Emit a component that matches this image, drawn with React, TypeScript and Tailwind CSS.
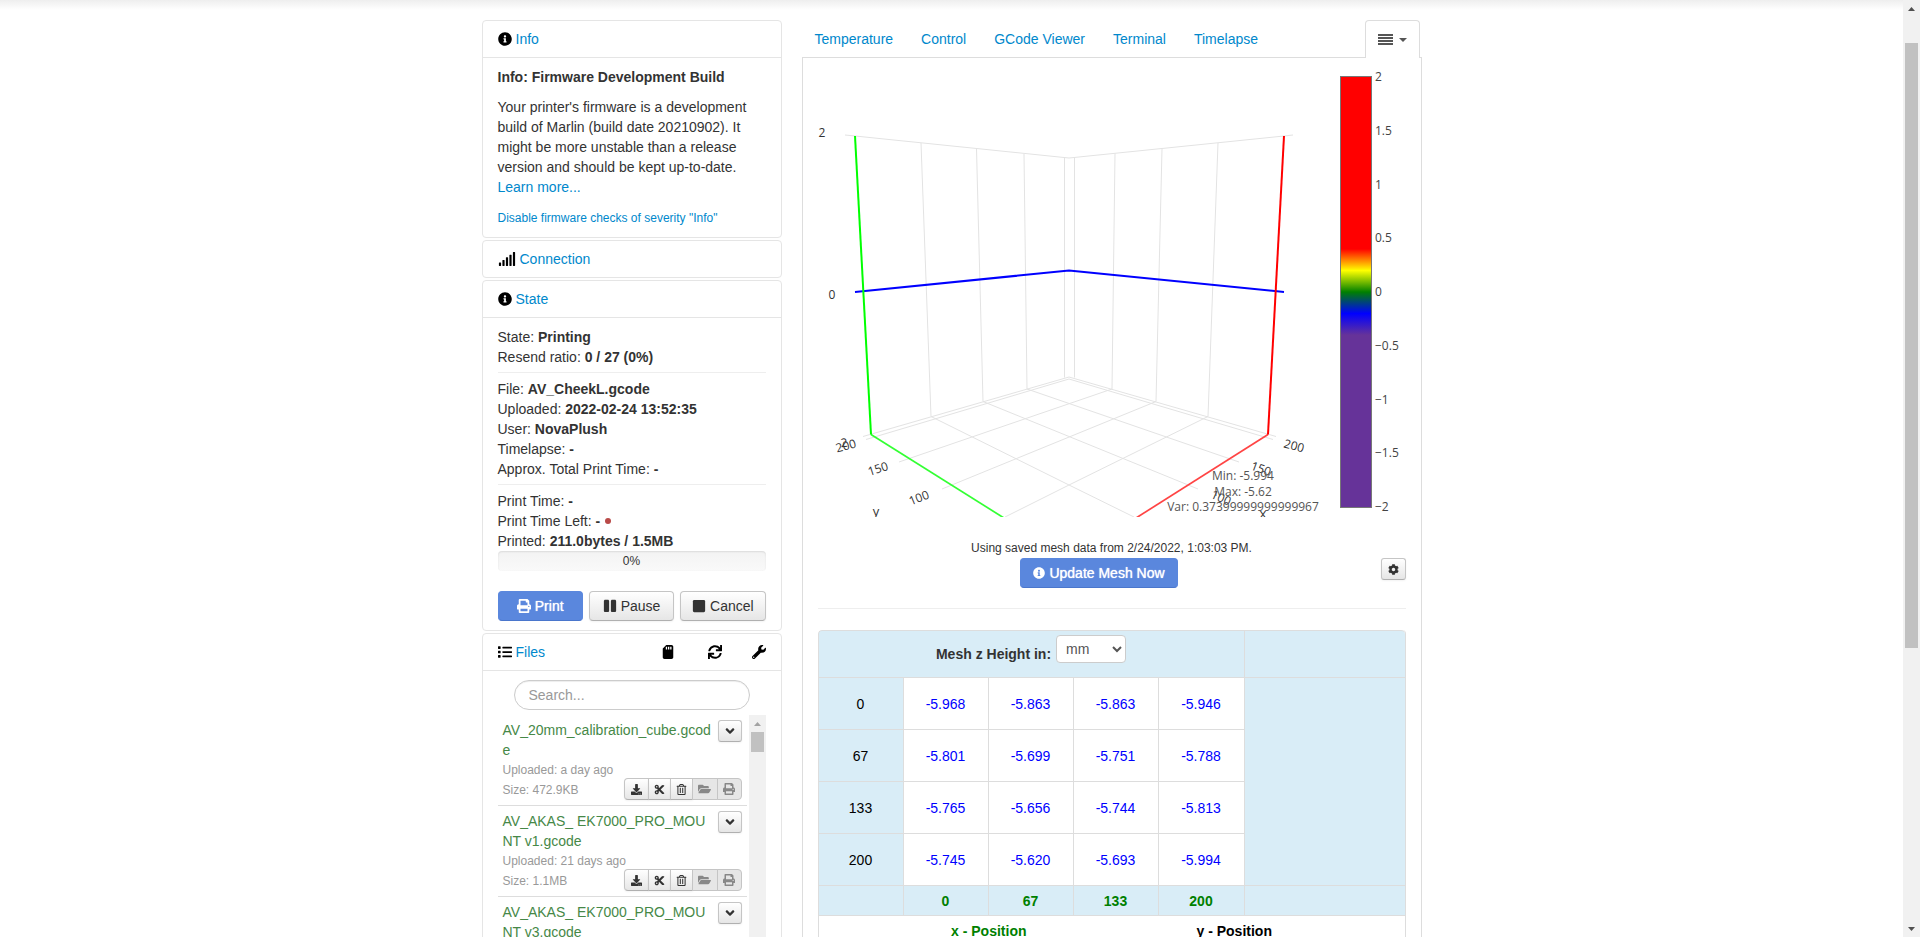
import React from 'react';
import {
  FaAngleDown,
  FaCog,
  FaCut,
  FaDownload,
  FaFolderOpen,
  FaInfoCircle,
  FaList,
  FaPause,
  FaPrint,
  FaRegTrashAlt,
  FaSdCard,
  FaSignal,
  FaStop,
  FaSync,
  FaWrench
} from 'react-icons/fa';

const btn = 'border border-[#c5c5c5] border-b-[#b0b0b0] bg-linear-to-b from-white to-[#e6e6e6] text-[#333] shadow-[0_1px_2px_rgba(0,0,0,0.05)]';
const btnPrimary = 'border border-[#5a87dd] border-b-[#4a76cc] bg-[#5a87dd] text-white [text-shadow:0_0_1px_#fff]';

const tabs = ['Temperature', 'Control', 'GCode Viewer', 'Terminal', 'Timelapse'];

const files = [
  { name: 'AV_20mm_calibration_cube.gcode', uploaded: 'a day ago', size: '472.9KB' },
  { name: 'AV_AKAS_ EK7000_PRO_MOUNT v1.gcode', uploaded: '21 days ago', size: '1.1MB' },
  { name: 'AV_AKAS_ EK7000_PRO_MOUNT v3.gcode', uploaded: '21 days ago', size: '1.1MB' }
];

const mesh = [
  { y: '0', z: ['-5.968', '-5.863', '-5.863', '-5.946'] },
  { y: '67', z: ['-5.801', '-5.699', '-5.751', '-5.788'] },
  { y: '133', z: ['-5.765', '-5.656', '-5.744', '-5.813'] },
  { y: '200', z: ['-5.745', '-5.620', '-5.693', '-5.994'] }
];

const ticks = ['2', '1.5', '1', '0.5', '0', '−0.5', '−1', '−1.5', '−2'];

interface PanelProps {
  icon: React.ReactNode;
  title: string;
  actions?: React.ReactNode;
  children?: React.ReactNode;
}

function Panel({ icon, title, actions, children }: PanelProps) {
  return <section className="mb-0.5 rounded border border-[#e5e5e5]">
      <div className="flex items-center justify-between px-[15px] py-2">
        <a href="#" className="flex items-center gap-1 text-[#0088cc]">
          <span className="text-black">{icon}</span>
          {title}
        </a>
        {actions}
      </div>
      {children && <div className="border-t border-[#e5e5e5] px-[15px] py-[9px]">{children}</div>}
    </section>;
}

function Row({ label, children }: { label: string; children: React.ReactNode }) {
  return <div>
      {label}: <strong>{children}</strong>
    </div>;
}

function Divider() {
  return <hr className="my-[5px] border-t border-b border-t-[#eee] border-b-white" />;
}

function StatePanel() {
  return <Panel icon={<FaInfoCircle />} title="State">
      <Row label="State">Printing</Row>
      <Row label="Resend ratio">0 / 27 (0%)</Row>
      <Divider />
      <Row label="File">AV_CheekL.gcode</Row>
      <Row label="Uploaded">2022-02-24 13:52:35</Row>
      <Row label="User">NovaPlush</Row>
      <Row label="Timelapse">-</Row>
      <Row label="Approx. Total Print Time">-</Row>
      <Divider />
      <Row label="Print Time">-</Row>
      <div className="flex items-center gap-[5px]">
        <Row label="Print Time Left">-</Row>
        <span className="size-1.5 rounded-full bg-[#b94a48]" />
      </div>
      <Row label="Printed">211.0bytes / 1.5MB</Row>
      <div role="progressbar" aria-valuenow={0} className="mb-5 h-5 rounded bg-linear-to-b from-[#f3f3f3] to-[#f9f9f9] text-center text-xs leading-5 shadow-[inset_0_1px_2px_rgba(0,0,0,0.1)]">
        0%
      </div>
      <div className="grid grid-cols-3 gap-1.5">
        <button className={`flex h-[30px] items-center justify-center gap-1 rounded ${btnPrimary}`}><FaPrint />Print</button>
        <button className={`flex h-[30px] items-center justify-center gap-1 rounded ${btn}`}><FaPause />Pause</button>
        <button className={`flex h-[30px] items-center justify-center gap-1 rounded ${btn}`}><FaStop />Cancel</button>
      </div>
    </Panel>;
}

function FileEntry({ name, uploaded, size }: { name: string; uploaded: string; size: string }) {
  const mini = `flex h-[22px] items-center justify-center text-[11px] ${btn}`;
  const off = 'flex h-[22px] items-center justify-center border border-[#c5c5c5] bg-[#e6e6e6] text-xs text-[#888]';
  return <li className="border-b border-[#ddd] p-[5px]">
      <div className="flex items-start gap-1.5">
        <a href="#" className="min-w-0 flex-1 break-all text-[#468847]">{name}</a>
        <button aria-label="Details" className={`flex h-[22px] w-6 shrink-0 items-center justify-center rounded-[3px] text-sm ${btn}`}>
          <FaAngleDown />
        </button>
      </div>
      <div className="text-xs leading-5 text-[#999]">Uploaded: {uploaded}</div>
      <div className="flex h-5 items-end justify-between text-xs leading-5 text-[#999]">
        <span>Size: {size}</span>
        <div className="flex">
          <button aria-label="Download" className={`w-[25px] rounded-l ${mini}`}><FaDownload /></button>
          <button aria-label="Cut" className={`-ml-px w-[23px] ${mini}`}><FaCut /></button>
          <button aria-label="Delete" className={`-ml-px w-[23px] ${mini}`}><FaRegTrashAlt /></button>
          <button aria-label="Load" disabled className={`-ml-px w-[26px] ${off}`}><FaFolderOpen className="h-3 w-[13px]" /></button>
          <button aria-label="Print" disabled className={`-ml-px w-[25px] rounded-r ${off}`}><FaPrint /></button>
        </div>
      </div>
    </li>;
}

function FilesPanel() {
  const actions = <div className="flex items-center text-black">
      <button aria-label="SD card" className="mr-[34px]"><FaSdCard className="h-3.5 w-3" /></button>
      <button aria-label="Refresh" className="mr-[30px]"><FaSync /></button>
      <button aria-label="Settings"><FaWrench /></button>
    </div>;
  return <Panel icon={<FaList />} title="Files" actions={actions}>
      <input
        type="search"
        aria-label="Search files"
        placeholder="Search..."
        className="mx-auto mb-[5px] block h-[30px] w-[236px] rounded-full border border-[#ccc] px-3.5 shadow-[inset_0_1px_1px_rgba(0,0,0,0.075)] placeholder:text-[#999]"
      />
      <div className="flex">
        <ul className="mr-0.5 min-w-0 flex-1">
          {files.map(file => <FileEntry key={file.name} {...file} />)}
        </ul>
        <div className="w-[17px] bg-[#f1f1f1]">
          <svg viewBox="0 0 17 17" className="block w-full"><path d="M5 11h7L8.500 7z" fill="#a3a3a3" /></svg>
          <div className="mx-0.5 h-5 bg-[#c1c1c1]" />
        </div>
      </div>
    </Panel>;
}

function MeshPlot() {
  return <svg viewBox="0 0 588 480" className="block w-full font-['Open_Sans',sans-serif] text-xs">
      <defs>
        <linearGradient id="scale" x1="0" y1="0" x2="0" y2="1">
          <stop offset="0.4" stopColor="#f00" />
          <stop offset="0.45" stopColor="#ff0" />
          <stop offset="0.5" stopColor="#008000" />
          <stop offset="0.55" stopColor="#00f" />
          <stop offset="0.6" stopColor="#639" />
        </linearGradient>
        <clipPath id="scene">
          <rect width="588" height="459" />
        </clipPath>
      </defs>

      <g clipPath="url(#scene)" fill="none">
        {/* walls and floor */}
        <g stroke="#e3e3e3">
          <path d="M27 77 37 78 251 100 466 78 475 77" />
          <path d="M103 85 113 358.500M158.500 91 165 343.500M206 96 209 331M246.500 99.500V319.500M256.500 99.500V319.500M297 95.500 294 331M344 91 338 343.500M400 85 390 358.500" />
          <path d="M45 378.500 251 319 458 378.500M48 381.500 251 321 455 381.500" />
          <path d="M113 358.500 251 427 316 459M165 343.500 380 431M209 331 421 404" />
          <path d="M390 358.500 251 427 187 459M338 343.500 124 431M294 331 81 404" />
        </g>
        {/* axes */}
        <path d="M53 376.500 186 460" stroke="#3f3" strokeWidth="1.700" />
        <path d="M450 376.500 318 460" stroke="#f44" strokeWidth="1.700" />
        <path d="M37 234 251 212.500 466 234" stroke="#00f" strokeWidth="2" />
        <path d="M37 78 53 376.500" stroke="#0f0" strokeWidth="2" />
        <path d="M466 78 450 376.500" stroke="#f00" strokeWidth="2" />
        <g fill="#333" textAnchor="middle">
          <text x="4" y="79">2</text>
          <text x="14" y="241">0</text>
          <text transform="translate(28 388) rotate(-15)" y="4">200</text>
          <text transform="translate(26 385) rotate(-5)" y="4">2</text>
          <text transform="translate(60 411) rotate(-18)" y="4">150</text>
          <text transform="translate(101 440) rotate(-22)" y="4">100</text>
          <text transform="translate(476 388) rotate(15)" y="4">200</text>
          <text transform="translate(443 411) rotate(20)" y="4">150</text>
          <text transform="translate(403 440) rotate(24)" y="4">100</text>
          <text x="58" y="458" className="text-[13px]">y</text>
          <text x="445" y="460" className="text-[13px]">x</text>
        </g>
      </g>

      <g fill="#555" textAnchor="middle">
        <text x="425" y="422">Min: -5.994</text>
        <text x="425" y="438">Max: -5.62</text>
        <text x="425" y="453">Var: 0.37399999999999967</text>
      </g>

      <rect x="522.500" y="18.500" width="31" height="431" fill="url(#scale)" stroke="#777" />
      <g fill="#444">
        {ticks.map((tick, i) => <text key={tick} x="557" y={23 + i * 53.75}>{tick}</text>)}
      </g>
    </svg>;
}

function MeshTable() {
  const cell = 'border-t border-l border-[#ddd]';
  const blue = 'bg-[#d9edf7]';
  return <table className="w-full table-fixed border-separate border-spacing-0 overflow-hidden rounded border-r border-b border-[#ddd] text-center">
      <colgroup>
        <col className="w-[85px]" />
        <col className="w-[85px]" />
        <col className="w-[85px]" />
        <col className="w-[85px]" />
        <col className="w-[86px]" />
        <col />
      </colgroup>
      <thead>
        <tr className="h-[47px]">
          <th colSpan={5} className={`rounded-tl ${cell} ${blue}`}>
            <div className="flex items-center justify-center gap-[5px]">
              <label htmlFor="unit">Mesh z Height in:</label>
              <select id="unit" className="mb-2.5 h-7 w-[70px] rounded border border-[#ccc] bg-white px-[5px] font-normal text-[#555]">
                <option>mm</option>
              </select>
            </div>
          </th>
          <th className={`rounded-tr ${cell} ${blue}`} />
        </tr>
      </thead>
      <tbody>
        {mesh.map((row, i) => <tr key={row.y} className="h-[52px]">
            <td className={`text-black ${cell} ${blue}`}>{row.y}</td>
            {row.z.map((z, j) => <td key={j} className={`text-[#0000ff] ${cell}`}>{z}</td>)}
            {i === 0 && <td rowSpan={4} className={`${cell} ${blue}`} />}
          </tr>)}
        <tr className="h-[30px] font-bold text-[#008000]">
          <td className={`${cell} ${blue}`} />
          {mesh.map(row => <td key={row.y} className={`${cell} ${blue}`}>{row.y}</td>)}
          <td className={`${cell} ${blue}`} />
        </tr>
        <tr className="h-[30px] font-bold">
          <td colSpan={6} className={cell}>
            <div className="flex justify-center gap-[170px]">
              <span className="text-[#008000]">x - Position</span>
              <span className="text-black">y - Position</span>
            </div>
          </td>
        </tr>
      </tbody>
    </table>;
}

function PageScrollbar() {
  return <div className="flex w-[17px] shrink-0 flex-col bg-[#f1f1f1]">
      <svg viewBox="0 0 17 17" className="block w-full"><path d="M5 11h7L8.500 7z" fill="#505050" /></svg>
      <div className="flex flex-1 flex-col px-0.5 pt-[26px]">
        <div className="h-[69%] bg-[#c1c1c1]" />
      </div>
      <svg viewBox="0 0 17 17" className="block w-full"><path d="M5 7h7L8.500 11z" fill="#505050" /></svg>
    </div>;
}

export default function App() {
  return <div className="flex h-screen overflow-hidden bg-white font-['Liberation_Sans',Arial,sans-serif] text-sm leading-5 text-[#333]">
      <main className="min-w-0 flex-1">
        <div className="mb-2.5 h-2.5 bg-linear-to-b from-[#eee] to-white" />
        <div className="mx-auto flex max-w-[940px] gap-5">
          <aside className="w-[300px] shrink-0">
            <Panel icon={<FaInfoCircle />} title="Info">
              <h4 className="mb-2.5 font-bold">Info: Firmware Development Build</h4>
              <p className="mb-[11px]">
                Your printer's firmware is a development build of Marlin (build date 20210902). It might be more
                unstable than a release version and should be kept up-to-date.{' '}
                <a href="#" className="text-[#0088cc]">Learn more...</a>
              </p>
              <a href="#" className="block text-xs leading-5 text-[#0088cc]">Disable firmware checks of severity "Info"</a>
            </Panel>
            <Panel icon={<FaSignal className="h-3.5 w-[18px]" />} title="Connection" />
            <StatePanel />
            <FilesPanel />
          </aside>

          <div className="min-w-0 flex-1">
            <nav className="flex border-b border-[#ddd]">
              {tabs.map(tab => <a key={tab} href="#" className="mr-0.5 px-[13px] pt-[9px] pb-2 text-[#0088cc]">{tab}</a>)}
              <button aria-label="More tabs" className="mr-0.5 -mb-px ml-auto flex items-center gap-1.5 rounded-t border border-b-0 border-[#ddd] bg-white px-3 text-[#555]">
                <svg viewBox="0 0 15 11" className="h-[11px] w-[15px]"><path d="M0 0h15v2H0zM0 3h15v2H0zM0 6h15v2H0zM0 9h15v2H0z" fill="currentColor" /></svg>
                <svg viewBox="0 0 8 4" className="h-1 w-2"><path d="M0 0h8L4 4z" fill="currentColor" /></svg>
              </button>
            </nav>
            <div className="border-x border-[#ddd] px-[15px]">
              <MeshPlot />
              <p className="text-center text-xs leading-5">Using saved mesh data from 2/24/2022, 1:03:03 PM.</p>
              <div className="flex items-start">
                <div className="flex flex-1 justify-center">
                  <button className={`flex h-[30px] items-center gap-1 rounded px-3 ${btnPrimary}`}>
                    <FaInfoCircle className="size-3" />Update Mesh Now
                  </button>
                </div>
                <button aria-label="Mesh settings" className={`flex h-[22px] w-[25px] items-center justify-center rounded-[3px] text-[11px] ${btn}`}>
                  <FaCog />
                </button>
              </div>
              <hr className="my-5 border-t border-b border-t-[#eee] border-b-white" />
              <MeshTable />
            </div>
          </div>
        </div>
      </main>
      <PageScrollbar />
    </div>;
}
